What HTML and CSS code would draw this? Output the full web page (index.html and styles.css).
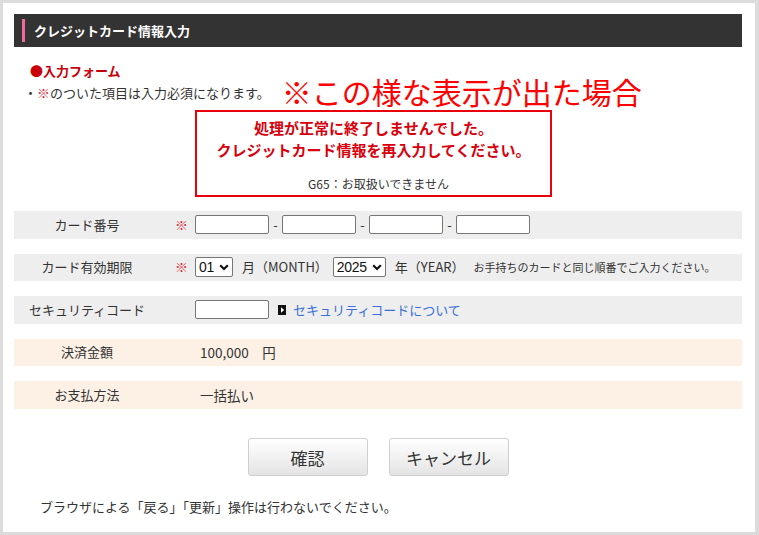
FILE: index.html
```html
<!DOCTYPE html>
<html lang="ja">
<head>
<meta charset="utf-8">
<title>クレジットカード情報入力</title>
<link rel="stylesheet" href="styles.css">
</head>
<body>
<div class="page">
  <div class="title-bar"><span class="title-mark"></span><span class="title-text">クレジットカード情報入力</span></div>

  <div class="intro">
    <div class="form-heading">●入力フォーム</div>
    <div class="intro-row">
      <span class="note">・<span class="req">※</span>のついた項目は入力必須になります。</span>
      <span class="callout">※この様な表示が出た場合</span>
    </div>
  </div>

  <div class="error-box">
    <div class="error-main">処理が正常に終了しませんでした。<br>クレジットカード情報を再入力してください。</div>
    <div class="error-code">G65：お取扱いできません</div>
  </div>

  <div class="rows">
    <div class="row gray">
      <div class="label">カード番号</div>
      <div class="mark">※</div>
      <div class="value">
        <input class="box" type="text"><span class="dash">-</span><input class="box" type="text"><span class="dash">-</span><input class="box" type="text"><span class="dash">-</span><input class="box" type="text">
      </div>
    </div>
    <div class="row gray">
      <div class="label">カード有効期限</div>
      <div class="mark">※</div>
      <div class="value">
        <span class="sel-wrap sel-month"><select class="sel"><option>01</option></select><svg class="chev" width="10" height="7" viewBox="0 0 10 7"><path d="M1.2 1.2 L5 5 L8.8 1.2" fill="none" stroke="#111" stroke-width="2.2"/></svg></span>
        <span class="unit">月（MONTH）</span>
        <span class="sel-wrap sel-year"><select class="sel"><option>2025</option></select><svg class="chev" width="10" height="7" viewBox="0 0 10 7"><path d="M1.2 1.2 L5 5 L8.8 1.2" fill="none" stroke="#111" stroke-width="2.2"/></svg></span>
        <span class="unit">年（YEAR）</span>
        <span class="hint">お手持ちのカードと同じ順番でご入力ください。</span>
      </div>
    </div>
    <div class="row gray">
      <div class="label">セキュリティコード</div>
      <div class="mark"></div>
      <div class="value">
        <input class="box" type="text">
        <svg class="arrow-icon" width="8" height="10" viewBox="0 0 8 10"><rect width="8" height="10" fill="#111"/><path d="M3 2.2 L6.2 5 L3 7.8 Z" fill="#fff"/></svg>
        <a class="link" href="#">セキュリティコードについて</a>
      </div>
    </div>
    <div class="row peach">
      <div class="label">決済金額</div>
      <div class="mark"></div>
      <div class="value text-value">100,000　円</div>
    </div>
    <div class="row peach">
      <div class="label">お支払方法</div>
      <div class="mark"></div>
      <div class="value text-value">一括払い</div>
    </div>
  </div>

  <div class="buttons">
    <button class="btn" type="button">確認</button>
    <button class="btn" type="button">キャンセル</button>
  </div>

  <p class="footer-note">ブラウザによる「戻る」「更新」操作は行わないでください。</p>
</div>
</body>
</html>
```

FILE: styles.css
```css
html, body {
  margin: 0;
  padding: 0;
}
body {
  background: #dcdcdc;
  font-family: "Noto Sans CJK JP", "Noto Sans", sans-serif;
  font-size: 13px;
  color: #333;
  line-height: 20px;
}
.page {
  margin: 3px 4px 3px 3px;
  height: 529px;
  box-sizing: border-box;
  background: #fff;
  padding: 11px 13px 0 11px;
  overflow: hidden;
}
.title-bar {
  height: 33px;
  background: #333;
  display: flex;
  align-items: center;
}
.title-mark {
  width: 3px;
  height: 23px;
  background: #f06b9b;
  margin-left: 8px;
}
.title-text {
  margin-left: 9px;
  color: #fff;
  font-weight: bold;
  font-size: 13px;
}
.intro {
  margin-top: 15px;
}
.form-heading {
  color: #c8000b;
  font-weight: bold;
  padding-left: 16px;
  line-height: 18px;
}
.intro-row {
  display: flex;
  align-items: flex-start;
  padding-left: 10px;
}
.note {
  line-height: 26px;
}
.req {
  color: #e0303a;
}
.callout {
  margin-left: 12px;
  color: #ff0000;
  font-size: 30px;
  line-height: 22px;
}
.error-box {
  margin: 4px 0 0 181px;
  width: 357px;
  height: 87px;
  box-sizing: border-box;
  border: 2px solid #e8000c;
  text-align: center;
  padding-top: 5px;
}
.error-main {
  color: #d8000c;
  font-weight: bold;
  font-size: 15px;
  line-height: 22px;
}
.error-code {
  margin-top: 15px;
  font-size: 12px;
  line-height: 16px;
  color: #333;
  padding-left: 10px;
}
.rows {
  margin-top: 14px;
  display: flex;
  flex-direction: column;
  gap: 15px;
}
.row {
  height: 27.5px;
  display: flex;
  align-items: center;
}
.gray {
  background: #eeeeee;
}
.peach {
  background: #fdf1e6;
}
.label {
  width: 146px;
  text-align: center;
  flex: none;
}
.mark {
  width: 35px;
  box-sizing: border-box;
  padding-left: 15px;
  color: #e0303a;
  flex: none;
}
.value {
  display: flex;
  align-items: center;
}
.text-value {
  padding-left: 5px;
  font-size: 13.5px;
}
.box {
  width: 74px;
  height: 19px;
  box-sizing: border-box;
  border: 1px solid #767676;
  border-radius: 2px;
  background: #fff;
  margin: 0;
  padding: 0 3px;
  flex: none;
}
.dash {
  width: 13px;
  flex: none;
  text-align: center;
}
.sel-wrap {
  position: relative;
  display: block;
  height: 20px;
  flex: none;
}
.sel {
  appearance: none;
  -webkit-appearance: none;
  display: block;
  width: 100%;
  height: 20px;
  box-sizing: border-box;
  font-family: "Liberation Sans", Arial, sans-serif;
  font-size: 14px;
  letter-spacing: -0.3px;
  color: #111;
  border: 1px solid #767676;
  border-radius: 2px;
  background: #fff;
  margin: 0;
  padding: 0 0 0 3px;
}
.chev {
  position: absolute;
  right: 4px;
  top: 7px;
  pointer-events: none;
}
.sel-month {
  width: 38px;
}
.sel-year {
  width: 53px;
  margin-left: 5px;
}
.unit {
  margin-left: 9px;
}
.hint {
  margin-left: 9px;
  font-size: 11px;
}
.arrow-icon {
  margin-left: 9px;
  flex: none;
}
.link {
  margin-left: 7px;
  color: #3a6fd8;
  text-decoration: none;
}
.buttons {
  margin-top: 29.5px;
  display: flex;
  justify-content: center;
  gap: 21px;
}
.btn {
  width: 120px;
  height: 38px;
  font-family: "Noto Sans CJK JP", "Noto Sans", sans-serif;
  font-size: 17px;
  color: #333;
  border: 1px solid #cfcfcf;
  border-radius: 3px;
  background: linear-gradient(#ffffff, #e4e4e4);
  padding: 0;
}
.footer-note {
  margin: 21px 0 0;
  padding-left: 26px;
}
```
